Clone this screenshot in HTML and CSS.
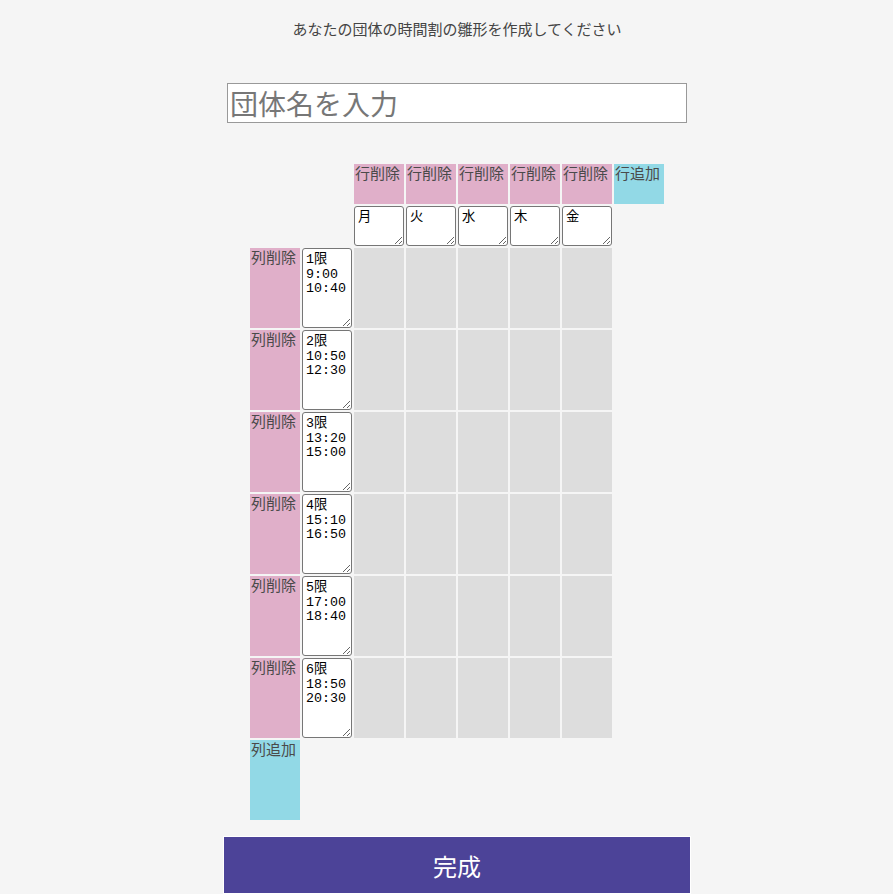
FILE: index.html
```html
<!DOCTYPE html>
<html lang="ja">
<head>
  <meta charset="UTF-8" />
  <meta name="viewport" content="width=device-width, initial-scale=1.0"/>
  <title>時間割の雛形</title>
  <link rel="stylesheet" href="styles.css">
</head>
<body>

  <p class="lead">あなたの団体の時間割の雛形を作成してください</p>

  <input type="text" class="group-name" placeholder="団体名を入力" />

  <table class="timetable">
    <tr class="head-row">
      <td></td>
      <td></td>
      <td class="del">行削除</td>
      <td class="del">行削除</td>
      <td class="del">行削除</td>
      <td class="del">行削除</td>
      <td class="del">行削除</td>
      <td class="add">行追加</td>
    </tr>
    <tr class="day-row">
      <td></td>
      <td></td>
      <td><textarea class="day">月</textarea></td>
      <td><textarea class="day">火</textarea></td>
      <td><textarea class="day">水</textarea></td>
      <td><textarea class="day">木</textarea></td>
      <td><textarea class="day">金</textarea></td>
      <td></td>
    </tr>
    <tr class="period-row">
      <td class="del">列削除</td>
      <td><textarea class="period">1限
9:00
10:40</textarea></td>
      <td class="slot"></td><td class="slot"></td><td class="slot"></td><td class="slot"></td><td class="slot"></td>
      <td></td>
    </tr>
    <tr class="period-row">
      <td class="del">列削除</td>
      <td><textarea class="period">2限
10:50
12:30</textarea></td>
      <td class="slot"></td><td class="slot"></td><td class="slot"></td><td class="slot"></td><td class="slot"></td>
      <td></td>
    </tr>
    <tr class="period-row">
      <td class="del">列削除</td>
      <td><textarea class="period">3限
13:20
15:00</textarea></td>
      <td class="slot"></td><td class="slot"></td><td class="slot"></td><td class="slot"></td><td class="slot"></td>
      <td></td>
    </tr>
    <tr class="period-row">
      <td class="del">列削除</td>
      <td><textarea class="period">4限
15:10
16:50</textarea></td>
      <td class="slot"></td><td class="slot"></td><td class="slot"></td><td class="slot"></td><td class="slot"></td>
      <td></td>
    </tr>
    <tr class="period-row">
      <td class="del">列削除</td>
      <td><textarea class="period">5限
17:00
18:40</textarea></td>
      <td class="slot"></td><td class="slot"></td><td class="slot"></td><td class="slot"></td><td class="slot"></td>
      <td></td>
    </tr>
    <tr class="period-row">
      <td class="del">列削除</td>
      <td><textarea class="period">6限
18:50
20:30</textarea></td>
      <td class="slot"></td><td class="slot"></td><td class="slot"></td><td class="slot"></td><td class="slot"></td>
      <td></td>
    </tr>
    <tr class="period-row">
      <td class="add">列追加</td>
      <td></td><td></td><td></td><td></td><td></td><td></td><td></td>
    </tr>
  </table>

  <button class="done">完成</button>

</body>
</html>
```

FILE: styles.css
```css
body {
  margin: 0 0 0 21px;
  background-color: #f5f5f5;
  font-family: "Noto Sans CJK JP", "Noto Sans", sans-serif;
  color: #333;
  display: flex;
  flex-direction: column;
  align-items: center;
}

.lead {
  margin: 19px 0 0;
  font-size: 15px;
  line-height: 20px;
  color: #444;
}

.group-name {
  margin-top: 44px;
  width: 460px;
  height: 40px;
  box-sizing: border-box;
  padding: 0 2px;
  border: 1px solid #999;
  border-radius: 0;
  background: #fff;
  font-family: "Noto Sans CJK JP", sans-serif;
  font-size: 28px;
}

.group-name::placeholder {
  color: #777;
}

.timetable {
  margin-top: 39px;
  border-collapse: separate;
  border-spacing: 2px;
}

.timetable td {
  width: 50px;
  padding: 0;
  text-indent: 1px;
  vertical-align: top;
  font-size: 15px;
  line-height: 17px;
  color: #4a4a4a;
}

.head-row td,
.day-row td {
  height: 40px;
}

.period-row td {
  height: 80px;
}

.del {
  background-color: #e0afc9;
}

.add {
  background-color: #92d9e6;
}

.slot {
  background-color: #dddddd;
}

textarea {
  display: block;
  box-sizing: border-box;
  width: 50px;
  margin: 0;
  padding: 4px 2px 2px 3px;
  border: 1px solid #767676;
  border-radius: 3px;
  background: #fff;
  font-family: "Liberation Mono", "Noto Sans CJK JP", monospace;
  font-size: 13.33px;
  line-height: 14.5px;
  text-indent: 0;
  color: #000;
  overflow: hidden;
}

.day {
  height: 40px;
}

.period {
  height: 80px;
}

.done {
  margin-top: 14px;
  width: 468px;
  height: 58px;
  border: 1px solid #fff;
  background-color: #4c4398;
  color: #fff;
  font-family: "Noto Sans CJK JP", sans-serif;
  font-size: 24px;
  cursor: pointer;
}
```
